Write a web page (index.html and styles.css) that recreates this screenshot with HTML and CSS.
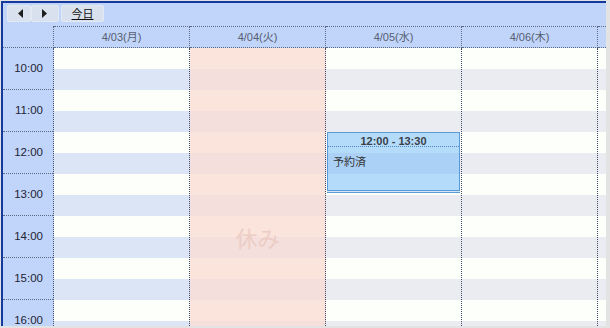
FILE: index.html
```html
<!DOCTYPE html>
<html lang="ja">
<head>
    <meta charset="UTF-8">
    <title>スケジュール</title>
    <link rel="stylesheet" href="styles.css">
</head>
<body>
    <div class="scheduler">
        <div class="toolbar">
            <button class="nav-btn prev-btn" title="前へ">
                <svg width="5" height="9" viewBox="0 0 5 9"><path d="M5 0 L0 4.5 L5 9 Z" fill="#1c1c1c"/></svg>
            </button>
            <button class="nav-btn next-btn" title="次へ">
                <svg width="5" height="9" viewBox="0 0 5 9"><path d="M0 0 L5 4.5 L0 9 Z" fill="#1c1c1c"/></svg>
            </button>
            <button class="today-btn">今日</button>
        </div>

        <div class="day-header">
            <div class="corner"></div>
            <div class="day-name">4/03(月)</div>
            <div class="day-name">4/04(火)</div>
            <div class="day-name">4/05(水)</div>
            <div class="day-name">4/06(木)</div>
            <div class="day-name day-name-rest"></div>
        </div>

        <div class="grid">
            <div class="times">
                <div class="hour">10:00</div>
                <div class="hour">11:00</div>
                <div class="hour">12:00</div>
                <div class="hour">13:00</div>
                <div class="hour">14:00</div>
                <div class="hour">15:00</div>
                <div class="hour">16:00</div>
            </div>
            <div class="day day-first"></div>
            <div class="day day-off">
                <div class="off-label">休み</div>
            </div>
            <div class="day">
                <div class="appt">
                    <div class="appt-time">12:00 - 13:30</div>
                    <div class="appt-title">予約済</div>
                </div>
            </div>
            <div class="day"></div>
            <div class="day day-rest"></div>
        </div>
    </div>
</body>
</html>
```

FILE: styles.css
```css
body {
    margin: 0;
    background-color: #e3e3e3;
    font-family: 'Liberation Sans', 'Noto Sans CJK JP', sans-serif;
    font-size: 11px;
    color: #222;
}
.scheduler {
    margin: 1px 0 0 1px;
    width: 603px;
    height: 323px;
    border-top: 2px solid #16399d;
    border-left: 2px solid #16399d;
    background-color: #c1d5fb;
    overflow: hidden;
}

/* toolbar */
.toolbar {
    display: flex;
    align-items: flex-start;
    height: 23px;
    padding: 2px 0 0 4px;
    box-sizing: border-box;
}
.nav-btn,
.today-btn {
    height: 17px;
    margin: 0;
    padding: 0;
    border: 1px solid #e3e9f2;
    border-radius: 2px;
    background-color: #d9e1ee;
    display: flex;
    align-items: center;
    justify-content: center;
    cursor: pointer;
}
.prev-btn {
    width: 24px;
    padding-left: 3px;
}
.next-btn {
    width: 28px;
    margin-left: 0;
    padding-right: 2px;
}
.today-btn {
    width: 43px;
    margin-left: 2px;
    font-family: 'Noto Sans CJK JP', sans-serif;
    font-size: 11px;
    line-height: 15px;
    color: #111;
    text-decoration: underline;
}

/* date header */
.day-header {
    display: flex;
    height: 22px;
}
.corner {
    width: 50px;
    flex: none;
    border-right: 1px dotted #5d6883;
    border-bottom: 1px dotted #5d6883;
}
.day-name {
    width: 135px;
    flex: none;
    height: 20px;
    line-height: 20px;
    text-align: center;
    color: #565e70;
    border-top: 1px dotted #5d6883;
    border-bottom: 1px dotted #5d6883;
    border-right: 1px dotted #5d6883;
}
.day-name-rest {
    flex: 1;
    width: auto;
    border-right: none;
}

/* time grid */
.grid {
    display: flex;
    height: 278px;
    overflow: hidden;
}
.times {
    width: 50px;
    flex: none;
    border-right: 1px dotted #4a5774;
}
.hour {
    height: 41px;
    line-height: 41px;
    border-bottom: 1px dotted #5d6883;
    text-align: right;
    padding-right: 10px;
    font-size: 11.5px;
    color: #1e2433;
}
.day {
    position: relative;
    width: 135px;
    height: 294px;
    flex: none;
    border-right: 1px dotted #3e4b68;
    background: repeating-linear-gradient(#fcfffa 0 21px, #ebecf2 21px 42px);
}
.day-first {
    background: repeating-linear-gradient(#fcfffa 0 21px, #dce5f5 21px 42px);
}
.day-off {
    background: repeating-linear-gradient(#fae4dc 0 21px, #f4dfdc 21px 42px);
}
.day-rest {
    flex: 1;
    width: auto;
    border-right: none;
}
.off-label {
    position: absolute;
    top: 168px;
    left: 0;
    right: 0;
    height: 42px;
    display: flex;
    align-items: center;
    justify-content: center;
    font-family: 'Noto Sans CJK JP', sans-serif;
    font-size: 22px;
    color: #eccdc5;
}

/* appointment */
.appt {
    position: absolute;
    top: 84px;
    left: 1px;
    width: 133px;
    height: 59px;
    box-sizing: border-box;
    border: 1px solid #5b9ad6;
    background-color: rgba(100, 178, 250, 0.47);
    box-shadow: 0 1px 0 #d3e6fa, 0 2px 0 #5b9ad6;
}
.appt-time {
    height: 10px;
    padding-top: 3px;
    line-height: 10px;
    border-bottom: 1px dotted #4f86c0;
    text-align: center;
    font-weight: bold;
    color: #3a3f4a;
}
.appt-title {
    padding: 8px 0 0 5px;
    line-height: 13px;
    font-family: 'Noto Sans CJK JP', sans-serif;
    color: #333;
}
```
